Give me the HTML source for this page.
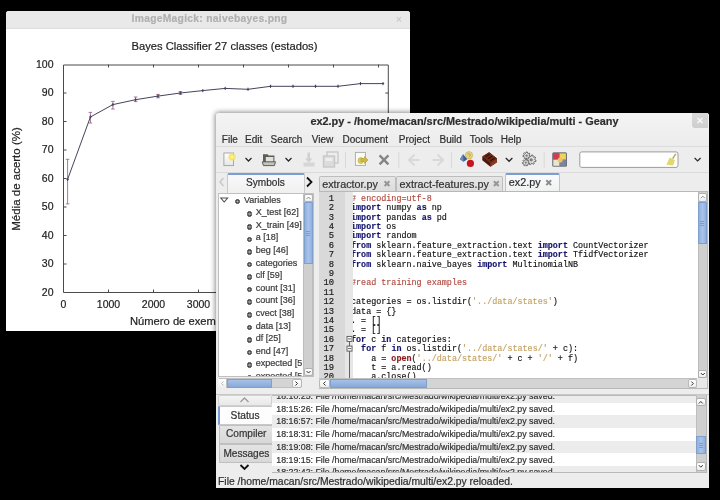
<!DOCTYPE html>
<html><head><meta charset="utf-8">
<style>
*{margin:0;padding:0;box-sizing:border-box}
html,body{width:720px;height:500px;overflow:hidden;background:#000}
body{position:relative;font-family:"Liberation Sans",sans-serif;color:#222;-webkit-font-smoothing:antialiased;will-change:transform}
.a{position:absolute}
.t{position:absolute;white-space:pre;line-height:1;-webkit-text-stroke:0.2px currentColor}
</style></head><body>

<!-- ImageMagick window -->
<div class="a" id="im" style="left:6px;top:11px;width:404px;height:320px;background:#fff;border-radius:3px 3px 0 0;overflow:hidden">
  <div class="a" style="left:0;top:0;width:404px;height:18px;background:#e9e9e9;border-bottom:1px solid #dedede"></div>
  <div class="t" style="left:125.6px;top:3.3px;font-size:10.3px;letter-spacing:0.28px;font-weight:bold;color:#b0b0b0">ImageMagick: naivebayes.png</div>
  <div class="t" style="left:390px;top:4px;font-size:10px;color:#c8c8c8">×</div>
</div>

<!-- chart svg -->
<svg class="a" style="left:0;top:0" width="720" height="500" viewBox="0 0 720 500">
  <g font-family="Liberation Sans" font-size="10.5" fill="#222" stroke="#222" stroke-width="0.2">
    <text x="224.5" y="50" font-size="11.2" text-anchor="middle">Bayes Classifier 27 classes (estados)</text>
    <text x="53.5" y="67.9" text-anchor="end">100</text>
    <text x="53.5" y="96.4" text-anchor="end">90</text>
    <text x="53.5" y="124.9" text-anchor="end">80</text>
    <text x="53.5" y="153.4" text-anchor="end">70</text>
    <text x="53.5" y="181.9" text-anchor="end">60</text>
    <text x="53.5" y="210.4" text-anchor="end">50</text>
    <text x="53.5" y="238.9" text-anchor="end">40</text>
    <text x="53.5" y="267.4" text-anchor="end">30</text>
    <text x="53.5" y="295.9" text-anchor="end">20</text>
    <text x="63.5" y="308" text-anchor="middle">0</text>
    <text x="108.5" y="308" text-anchor="middle">1000</text>
    <text x="153.5" y="308" text-anchor="middle">2000</text>
    <text x="198.5" y="308" text-anchor="middle">3000</text>
    <text x="130" y="325" font-size="11.2">Número de exemplos de treino</text>
    <text transform="translate(20,179) rotate(-90)" text-anchor="middle" font-size="11.5">Média de acerto (%)</text>
  </g>
  <g stroke="#4a4a4a" stroke-width="1" fill="none">
    <path d="M63.5 65 H388.3 V292.5 H63.5 Z"/>
    <path d="M63.5 93 h3 M63.5 121.5 h3 M63.5 150 h3 M63.5 178.5 h3 M63.5 207 h3 M63.5 235.5 h3 M63.5 264 h3"/>
    <path d="M388.3 93 h-3 M388.3 121.5 h-3"/>
    <path d="M108.5 64.5 v3 M153.5 64.5 v3 M198.5 64.5 v3 M243.5 64.5 v3 M288.5 64.5 v3 M333.5 64.5 v3 M378.5 64.5 v3"/>
    <path d="M108.5 292.5 v-3 M153.5 292.5 v-3 M198.5 292.5 v-3"/>
  </g>
  <g stroke="#a06a8c" stroke-width="0.9" fill="none">
    <path d="M67.6 159.3 V203.9 M65.8 159.3 h3.6 M65.8 203.9 h3.6"/>
    <path d="M90.4 112.4 V123 M88.6 112.4 h3.6 M88.6 123 h3.6"/>
    <path d="M112.9 101.4 V109 M111.1 101.4 h3.6 M111.1 109 h3.6"/>
    <path d="M135.6 97 V101.6 M133.8 97 h3.6 M133.8 101.6 h3.6"/>
    <path d="M158 94.4 V97.8 M156.2 94.4 h3.6 M156.2 97.8 h3.6"/>
    <path d="M180.4 91.6 V94.4 M178.6 91.6 h3.6 M178.6 94.4 h3.6"/>
  </g>
  <polyline fill="none" stroke="#44445e" stroke-width="1" points="67.6,179.4 90.4,117 112.9,104.6 135.6,99.7 158,96.1 180.4,93 202.8,90.6 225.2,88.4 248,89.3 270.5,86.3 293,86.3 315.5,86.3 338,86.3 360.5,83.6 383,83.6"/>
  <g stroke="#44445e" stroke-width="1" fill="none">
    <path d="M67.6 177.8 v3.2 M66.4 179.4 h2.4 M90.4 115.4 v3.2 M89.2 117 h2.4 M112.9 103.0 v3.2 M111.7 104.6 h2.4 M135.6 98.1 v3.2 M134.4 99.7 h2.4 M158 94.5 v3.2 M156.8 96.1 h2.4 M180.4 91.4 v3.2 M179.2 93 h2.4 M202.8 89.0 v3.2 M201.6 90.6 h2.4 M225.2 86.8 v3.2 M224.0 88.4 h2.4 M248 87.7 v3.2 M246.8 89.3 h2.4 M270.5 84.7 v3.2 M269.3 86.3 h2.4 M293 84.7 v3.2 M291.8 86.3 h2.4 M315.5 84.7 v3.2 M314.3 86.3 h2.4 M338 84.7 v3.2 M336.8 86.3 h2.4 M360.5 82.0 v3.2 M359.3 83.6 h2.4 M383 82.0 v3.2 M381.8 83.6 h2.4"/>
  </g>
</svg>


<!-- Geany window -->
<div class="a" style="left:216px;top:113px;width:493px;height:375px;background:#ededed;border-radius:3px 3px 0 0;box-shadow:0 0 5px 1px rgba(0,0,0,0.45)"></div>
<div class="a" style="left:216px;top:113px;width:493px;height:34px;background:linear-gradient(#f4f4f4,#ececec);border-radius:3px 3px 0 0;border-bottom:1px solid #dcdcdc"></div>
<div class="t" style="left:310.4px;top:116px;font-size:10.9px;font-weight:bold;color:#2e2e2e">ex2.py - /home/macan/src/Mestrado/wikipedia/multi - Geany</div>
<!-- close button -->
<div class="a" style="left:692px;top:113px;width:16px;height:15px;background:linear-gradient(#dadada,#cecece);border-radius:0 3px 0 3px"></div>
<svg class="a" style="left:692px;top:113px" width="16" height="15"><path d="M5.5 5 L10.5 10 M10.5 5 L5.5 10" stroke="#f8f8f8" stroke-width="1.5"/></svg>
<!-- menu -->
<div class="t" style="left:221.8px;top:135px;font-size:10px;color:#2e2e2e">File</div>
<div class="t" style="left:245px;top:135px;font-size:10px;color:#2e2e2e">Edit</div>
<div class="t" style="left:270.6px;top:135px;font-size:10px;color:#2e2e2e">Search</div>
<div class="t" style="left:311.8px;top:135px;font-size:10px;color:#2e2e2e">View</div>
<div class="t" style="left:342.5px;top:135px;font-size:10px;color:#2e2e2e">Document</div>
<div class="t" style="left:398.8px;top:135px;font-size:10px;color:#2e2e2e">Project</div>
<div class="t" style="left:439.6px;top:135px;font-size:10px;color:#2e2e2e">Build</div>
<div class="t" style="left:469.7px;top:135px;font-size:10px;color:#2e2e2e">Tools</div>
<div class="t" style="left:500.8px;top:135px;font-size:10px;color:#2e2e2e">Help</div>


<!-- toolbar -->
<svg class="a" style="left:216px;top:147px" width="493" height="26" viewBox="216 147 493 26">
  <defs>
    <radialGradient id="star" cx="0.5" cy="0.5" r="0.5"><stop offset="0" stop-color="#fffbb0"/><stop offset="0.5" stop-color="#f3e35a"/><stop offset="1" stop-color="#f3e35a" stop-opacity="0"/></radialGradient>
    <linearGradient id="pg" x1="0" y1="0" x2="0" y2="1"><stop offset="0" stop-color="#fff"/><stop offset="1" stop-color="#e6e6e6"/></linearGradient>
  </defs>
  <!-- new -->
  <rect x="223.9" y="153" width="9.6" height="12.6" fill="url(#pg)" stroke="#a0a0a0" stroke-width="0.9"/>
  <circle cx="232" cy="157" r="4.6" fill="url(#star)"/>
  <path d="M245.5 158 l3 3 l3 -3" fill="none" stroke="#2a2a2a" stroke-width="1.3"/>
  <!-- open -->
  <path d="M263 163 V154.2 h4.6 l1 1.3 h5.8 V163 z" fill="#5c5c58"/>
  <rect x="265.8" y="157" width="7.6" height="5" fill="#e2e2da"/>
  <path d="M262.3 161.8 h13.2 l-1.1 3.8 h-11 z" fill="#c4c4b8" stroke="#505050" stroke-width="0.9"/>
  <path d="M285.5 158 l3 3 l3 -3" fill="none" stroke="#2a2a2a" stroke-width="1.3"/>
  <!-- save disabled -->
  <path d="M307.5 152.5 h2.5 v6 h2.5 l-3.7 4 l-3.7 -4 h2.4 z" fill="#d0d0d0"/>
  <rect x="303.5" y="162.5" width="11" height="4" fill="#d6d6d6"/>
  <!-- save all disabled -->
  <rect x="327" y="152" width="11" height="11" fill="none" stroke="#cdcdcd" stroke-width="1.6"/>
  <rect x="323.5" y="156" width="11" height="11" fill="#dcdcdc" stroke="#c8c8c8" stroke-width="1.4"/>
  <rect x="325.5" y="158" width="7" height="3" fill="#eeeeee"/>
  <line x1="345.5" y1="152" x2="345.5" y2="168" stroke="#d8d8d8"/>
  <!-- revert -->
  <rect x="355.4" y="152.4" width="10" height="13" fill="#fbfbf6" stroke="#a8a8a8" stroke-width="0.9"/>
  <ellipse cx="360.8" cy="160.6" rx="2.8" ry="3" fill="#d9cc60" stroke="#b9a840" stroke-width="0.6"/>
  <path d="M361 158.5 h3.5 v-2 l3.5 3.5 l-3.5 3.5 v-2 h-3.5 z" fill="#cdb845" stroke="#a99530" stroke-width="0.5"/>
  <!-- close -->
  <path d="M379.6 155.4 L388.4 164.4 M388.4 155.4 L379.6 164.4" stroke="#858585" stroke-width="2.4"/>
  <line x1="398.8" y1="152" x2="398.8" y2="168" stroke="#d8d8d8"/>
  <!-- back/forward disabled -->
  <path d="M414.5 154.5 l-5.5 5.5 l5.5 5.5 M409.5 160 h10" fill="none" stroke="#d9d9d9" stroke-width="2"/>
  <path d="M437.5 154.5 l5.5 5.5 l-5.5 5.5 M442.5 160 h-10" fill="none" stroke="#d9d9d9" stroke-width="2"/>
  <line x1="451.6" y1="152" x2="451.6" y2="168" stroke="#d8d8d8"/>
  <!-- compile -->
  <circle cx="469" cy="155.3" r="3.7" fill="#e2d27c" stroke="#c8b460" stroke-width="0.7"/>
  <path d="M467.6 154.2 q1.5 -1 2.6 0.4 q0.6 1.2 -1 2" fill="none" stroke="#b09a40" stroke-width="0.8"/>
  <path d="M463.1 154.3 L467.3 159.3 L463.6 161.7 L460 159.3 Z" fill="#3c5f90"/>
  <path d="M463.1 154.3 L463.6 161.7 L460 159.3 Z" fill="#6b8cb8"/>
  <circle cx="470.4" cy="163.4" r="3.6" fill="#c8141e"/>
  <!-- build brick -->
  <path d="M482.3 156.5 l6.8 -4.2 l7.9 6.3 v3.6 l-6.6 4.5 l-8.1 -6.4 z" fill="#4a170a"/>
  <path d="M482.3 156.5 l6.8 -4.2 l7.9 6.3 l-6.6 4.5 z" fill="#6e2a16"/>
  <path d="M490.4 163.1 l6.6 -4.5 v3.6 l-6.6 4.5 z" fill="#8a3a22"/>
  <path d="M485.5 156.8 l4.2 -2.7 M488 158.8 l4.2 -2.7 M490.5 160.8 l4.2 -2.7" stroke="#2e0d05" stroke-width="1.1"/>
<path d="M505.8 158 l3.3 3.3 l3.3 -3.3" fill="none" stroke="#2a2a2a" stroke-width="1.3"/>
  <!-- gears -->
<path d="M534.80,159.80 L536.07,160.38 L535.73,161.68 L534.34,161.56 L533.75,162.35 L534.23,163.65 L533.08,164.33 L532.18,163.26 L531.20,163.40 L530.62,164.67 L529.32,164.33 L529.44,162.94 L528.65,162.35 L527.35,162.83 L526.67,161.68 L527.74,160.78 L527.60,159.80 L526.33,159.22 L526.67,157.92 L528.06,158.04 L528.65,157.25 L528.17,155.95 L529.32,155.27 L530.22,156.34 L531.20,156.20 L531.78,154.93 L533.08,155.27 L532.96,156.66 L533.75,157.25 L535.05,156.77 L535.73,157.92 L534.66,158.82 Z" fill="#e2e2e2" stroke="#6a6a6a" stroke-width="1"/>
<circle cx="531.2" cy="159.8" r="1.62" fill="#7a7a7a"/>
<path d="M529.20,155.60 L530.27,156.10 L529.93,157.21 L528.77,157.03 L528.22,157.63 L528.50,158.78 L527.42,159.21 L526.83,158.19 L526.02,158.13 L525.30,159.06 L524.29,158.49 L524.72,157.40 L524.26,156.73 L523.08,156.74 L522.90,155.60 L524.02,155.25 L524.26,154.47 L523.51,153.56 L524.29,152.71 L525.27,153.37 L526.02,153.07 L526.27,151.91 L527.42,151.99 L527.51,153.17 L528.22,153.57 L529.27,153.04 L529.93,153.99 L529.07,154.80 Z" fill="#e2e2e2" stroke="#6a6a6a" stroke-width="1"/>
<circle cx="526.6" cy="155.6" r="1.17" fill="#7a7a7a"/>
<path d="M528.20,162.60 L529.17,163.06 L528.86,164.08 L527.80,163.92 L527.30,164.48 L527.54,165.52 L526.56,165.91 L526.02,164.99 L525.27,164.94 L524.61,165.78 L523.68,165.26 L524.07,164.26 L523.64,163.64 L522.57,163.65 L522.40,162.60 L523.42,162.28 L523.64,161.56 L522.96,160.73 L523.68,159.94 L524.57,160.54 L525.27,160.26 L525.50,159.21 L526.56,159.29 L526.64,160.35 L527.30,160.72 L528.26,160.25 L528.86,161.12 L528.08,161.86 Z" fill="#e2e2e2" stroke="#6a6a6a" stroke-width="1"/>
<circle cx="525.8" cy="162.6" r="1.08" fill="#7a7a7a"/>
<line x1="544.2" y1="152" x2="544.2" y2="168" stroke="#d8d8d8"/>
  <!-- color chooser -->
  <rect x="552.2" y="152.3" width="14.8" height="14.5" rx="1.5" fill="#707078"/>
  <rect x="553.3" y="153.4" width="6.3" height="6.3" fill="#d23a58"/>
  <rect x="559.6" y="153.4" width="6.3" height="6.3" fill="#efd35a"/>
  <rect x="553.3" y="159.7" width="6.3" height="6.1" fill="#e6e6d2"/>
  <rect x="559.6" y="159.7" width="6.3" height="6.1" fill="#7c84a4"/>
  <circle cx="560.2" cy="160" r="2.5" fill="#e9c560"/>
  <!-- search entry -->
  <rect x="579.8" y="151.9" width="98.2" height="15.5" rx="2" fill="#fff" stroke="#9c9c9c" stroke-width="1"/>
  <path d="M669.8 157.6 L675 160.2 L673 165.6 L666.4 164.8 Z" fill="#e2d66e"/>
  <path d="M675.8 153.8 L672.6 158.6" stroke="#b7a64c" stroke-width="1.4"/>
  <path d="M694.6 158 l3 3 l3 -3" fill="none" stroke="#2a2a2a" stroke-width="1.2"/>
</svg>
<div class="a" style="left:216px;top:172px;width:493px;height:1px;background:#dadada"></div>


<!-- sidebar -->
<svg class="a" style="left:216px;top:172px" width="100" height="22" viewBox="216 172 100 22">
  <path d="M223.5 178 l-3.5 4 l3.5 4" fill="none" stroke="#c4c4c4" stroke-width="1.3"/>
  <path d="M307 177.5 l4.5 4.5 l-4.5 4.5" fill="none" stroke="#111" stroke-width="1.8"/>
</svg>
<div class="a" style="left:226.5px;top:172.5px;width:78.3px;height:21px;background:linear-gradient(#f8f9fb,#efefef);border:1px solid #c8c8c8;border-bottom:none;border-top:2.5px solid #7c9dd0;border-radius:2px 2px 0 0"></div>
<div class="t" style="left:246px;top:178px;font-size:10.1px;color:#2e2e2e">Symbols</div>
<div class="a" style="left:217.5px;top:193px;width:96.5px;height:184px;background:#fff;border:1px solid #c0c0c0"></div>
<div style="position:absolute;left:218px;top:194px;width:83.5px;height:182px;overflow:hidden">
<div style="position:absolute;left:-218px;top:-194px;width:720px;height:500px">
<svg class="a" style="left:219px;top:196px" width="10" height="8"><path d="M1.8 2 h6.8 l-3.4 4 z" fill="none" stroke="#505050" stroke-width="1.1"/></svg>
<div class="t" style="left:243.9px;top:195.70px;font-size:9px;color:#3a3a3a">Variables</div>
<div class="a" style="left:234.9px;top:198.80px;width:5.6px;height:5.6px;border-radius:50%;background:radial-gradient(circle at 50% 50%,#b0b0b0 0,#8a8a8a 40%,#4a4a4a 75%);border:1px solid #3a3a3a"></div>
<div class="t" style="left:255.8px;top:208.28px;font-size:9px;color:#3a3a3a">X_test [62]</div>
<div class="a" style="left:246.6px;top:211.38px;width:5.6px;height:5.6px;border-radius:50%;background:radial-gradient(circle at 50% 50%,#b0b0b0 0,#8a8a8a 40%,#4a4a4a 75%);border:1px solid #3a3a3a"></div>
<div class="t" style="left:255.8px;top:220.86px;font-size:9px;color:#3a3a3a">X_train [49]</div>
<div class="a" style="left:246.6px;top:223.96px;width:5.6px;height:5.6px;border-radius:50%;background:radial-gradient(circle at 50% 50%,#b0b0b0 0,#8a8a8a 40%,#4a4a4a 75%);border:1px solid #3a3a3a"></div>
<div class="t" style="left:255.8px;top:233.44px;font-size:9px;color:#3a3a3a">a [18]</div>
<div class="a" style="left:246.6px;top:236.54px;width:5.6px;height:5.6px;border-radius:50%;background:radial-gradient(circle at 50% 50%,#b0b0b0 0,#8a8a8a 40%,#4a4a4a 75%);border:1px solid #3a3a3a"></div>
<div class="t" style="left:255.8px;top:246.02px;font-size:9px;color:#3a3a3a">beg [46]</div>
<div class="a" style="left:246.6px;top:249.12px;width:5.6px;height:5.6px;border-radius:50%;background:radial-gradient(circle at 50% 50%,#b0b0b0 0,#8a8a8a 40%,#4a4a4a 75%);border:1px solid #3a3a3a"></div>
<div class="t" style="left:255.8px;top:258.60px;font-size:9px;color:#3a3a3a">categories</div>
<div class="a" style="left:246.6px;top:261.70px;width:5.6px;height:5.6px;border-radius:50%;background:radial-gradient(circle at 50% 50%,#b0b0b0 0,#8a8a8a 40%,#4a4a4a 75%);border:1px solid #3a3a3a"></div>
<div class="t" style="left:255.8px;top:271.18px;font-size:9px;color:#3a3a3a">clf [59]</div>
<div class="a" style="left:246.6px;top:274.28px;width:5.6px;height:5.6px;border-radius:50%;background:radial-gradient(circle at 50% 50%,#b0b0b0 0,#8a8a8a 40%,#4a4a4a 75%);border:1px solid #3a3a3a"></div>
<div class="t" style="left:255.8px;top:283.76px;font-size:9px;color:#3a3a3a">count [31]</div>
<div class="a" style="left:246.6px;top:286.86px;width:5.6px;height:5.6px;border-radius:50%;background:radial-gradient(circle at 50% 50%,#b0b0b0 0,#8a8a8a 40%,#4a4a4a 75%);border:1px solid #3a3a3a"></div>
<div class="t" style="left:255.8px;top:296.34px;font-size:9px;color:#3a3a3a">count [36]</div>
<div class="a" style="left:246.6px;top:299.44px;width:5.6px;height:5.6px;border-radius:50%;background:radial-gradient(circle at 50% 50%,#b0b0b0 0,#8a8a8a 40%,#4a4a4a 75%);border:1px solid #3a3a3a"></div>
<div class="t" style="left:255.8px;top:308.92px;font-size:9px;color:#3a3a3a">cvect [38]</div>
<div class="a" style="left:246.6px;top:312.02px;width:5.6px;height:5.6px;border-radius:50%;background:radial-gradient(circle at 50% 50%,#b0b0b0 0,#8a8a8a 40%,#4a4a4a 75%);border:1px solid #3a3a3a"></div>
<div class="t" style="left:255.8px;top:321.50px;font-size:9px;color:#3a3a3a">data [13]</div>
<div class="a" style="left:246.6px;top:324.60px;width:5.6px;height:5.6px;border-radius:50%;background:radial-gradient(circle at 50% 50%,#b0b0b0 0,#8a8a8a 40%,#4a4a4a 75%);border:1px solid #3a3a3a"></div>
<div class="t" style="left:255.8px;top:334.08px;font-size:9px;color:#3a3a3a">df [25]</div>
<div class="a" style="left:246.6px;top:337.18px;width:5.6px;height:5.6px;border-radius:50%;background:radial-gradient(circle at 50% 50%,#b0b0b0 0,#8a8a8a 40%,#4a4a4a 75%);border:1px solid #3a3a3a"></div>
<div class="t" style="left:255.8px;top:346.66px;font-size:9px;color:#3a3a3a">end [47]</div>
<div class="a" style="left:246.6px;top:349.76px;width:5.6px;height:5.6px;border-radius:50%;background:radial-gradient(circle at 50% 50%,#b0b0b0 0,#8a8a8a 40%,#4a4a4a 75%);border:1px solid #3a3a3a"></div>
<div class="t" style="left:255.8px;top:359.24px;font-size:9px;color:#3a3a3a">expected [56]</div>
<div class="a" style="left:246.6px;top:362.34px;width:5.6px;height:5.6px;border-radius:50%;background:radial-gradient(circle at 50% 50%,#b0b0b0 0,#8a8a8a 40%,#4a4a4a 75%);border:1px solid #3a3a3a"></div>
<div class="t" style="left:255.8px;top:371.82px;font-size:9px;color:#3a3a3a">expected [57]</div>
<div class="a" style="left:246.6px;top:374.92px;width:5.6px;height:5.6px;border-radius:50%;background:radial-gradient(circle at 50% 50%,#b0b0b0 0,#8a8a8a 40%,#4a4a4a 75%);border:1px solid #3a3a3a"></div>

</div></div>
<!-- sidebar vscroll -->
<div class="a" style="left:303.2px;top:193.5px;width:10px;height:183px;background:#cfcfcf;border:1px solid #bdbdbd"></div>
<div class="a" style="left:303.7px;top:194px;width:9px;height:8px;background:linear-gradient(#fff,#eee);border:1px solid #b0b0b0;border-radius:2px"></div>
<svg class="a" style="left:303.7px;top:194px" width="9" height="8"><path d="M2.5 5 l2 -2 l2 2" fill="none" stroke="#888" stroke-width="0.9"/></svg>
<div class="a" style="left:303.7px;top:202px;width:9px;height:62px;background:linear-gradient(90deg,#8fb0de,#a9c4ea,#8fb0de);border:1px solid #7f9fcc"></div>
<div class="a" style="left:306px;top:231px;width:4px;height:5px;background:linear-gradient(#7f9cc8 0,#7f9cc8 1px,transparent 1px,transparent 2px,#7f9cc8 2px,#7f9cc8 3px,transparent 3px,transparent 4px,#7f9cc8 4px)"></div>
<div class="a" style="left:303.7px;top:367.8px;width:9px;height:8.5px;background:linear-gradient(#fff,#eee);border:1px solid #b0b0b0;border-radius:2px"></div>
<svg class="a" style="left:303.7px;top:367.8px" width="9" height="9"><path d="M2.5 3 l2 2 l2 -2" fill="none" stroke="#333" stroke-width="1"/></svg>
<!-- sidebar hscroll -->
<div class="a" style="left:217.5px;top:378.3px;width:84px;height:9.8px;background:#d4d4d4;border:1px solid #c0c0c0;border-radius:2px"></div>
<div class="a" style="left:218px;top:378.8px;width:9px;height:9px;background:linear-gradient(#fff,#eee);border-right:1px solid #c0c0c0"></div>
<svg class="a" style="left:218px;top:378.8px" width="9" height="9"><path d="M5.5 2.5 l-2 2 l2 2" fill="none" stroke="#bbb" stroke-width="1"/></svg>
<div class="a" style="left:227.1px;top:378.5px;width:44.7px;height:9.5px;background:linear-gradient(#a6c1e8,#88a9d8);border:1px solid #7f9fcc"></div>
<div class="a" style="left:292px;top:378.8px;width:9.5px;height:9px;background:linear-gradient(#fff,#eee);border:1px solid #b8b8b8;border-radius:2px"></div>
<svg class="a" style="left:292px;top:378.8px" width="9" height="9"><path d="M3.5 2.5 l2 2 l-2 2" fill="none" stroke="#333" stroke-width="1"/></svg>


<style>
.cl{position:absolute;left:-1.6px;white-space:pre;font-family:"Liberation Mono",monospace;font-size:8.42px;line-height:10px;color:#111;margin-top:-4.7px;-webkit-text-stroke:0.15px currentColor}
.k{color:#15156e;font-weight:bold}
.s{color:#c3a262}
.c{color:#b04a40}
.o{color:#8a1a1a;font-weight:bold}
.ln{position:absolute;left:319px;width:15px;text-align:right;white-space:pre;font-family:"Liberation Mono",monospace;font-size:8.8px;line-height:10px;color:#222;margin-top:1.1px;-webkit-text-stroke:0.2px #222}
</style>
<!-- editor tabs -->
<div class="a" style="left:319px;top:175.5px;width:76.5px;height:16px;background:linear-gradient(#e6e6e6,#dcdcdc);border:1px solid #bdbdbd;border-bottom:none;border-radius:2px 2px 0 0"></div>
<div class="t" style="left:322.2px;top:178.5px;font-size:10.8px;color:#333">extractor.py</div>
<div class="a" style="left:396.3px;top:175.5px;width:106.5px;height:16px;background:linear-gradient(#e6e6e6,#dcdcdc);border:1px solid #bdbdbd;border-bottom:none;border-radius:2px 2px 0 0"></div>
<div class="t" style="left:399.5px;top:178.5px;font-size:10.8px;color:#333">extract-features.py</div>
<div class="a" style="left:504.5px;top:172.5px;width:55px;height:19px;background:linear-gradient(#fafbfd,#f0f0f0);border:1px solid #c4c4c4;border-bottom:none;border-top:2.5px solid #7c9dd0;border-radius:2px 2px 0 0"></div>
<div class="t" style="left:508.8px;top:177px;font-size:10.8px;color:#2e2e2e">ex2.py</div>
<svg class="a" style="left:380px;top:176px" width="180" height="14" viewBox="380 176 180 14">
  <path d="M384.6 181.2 l4.8 4.8 M389.4 181.2 l-4.8 4.8" stroke="#969696" stroke-width="2"/>
  <path d="M493.9 181.2 l4.8 4.8 M498.7 181.2 l-4.8 4.8" stroke="#969696" stroke-width="2"/>
  <path d="M546.3 180.3 l4.8 4.8 M551.1 180.3 l-4.8 4.8" stroke="#8c8c8c" stroke-width="2"/>
</svg>
<!-- editor frame -->
<div class="a" style="left:318.5px;top:191px;width:389px;height:197.5px;background:#fff;border:1px solid #b8b8b8"></div>
<div class="a" style="left:319px;top:192px;width:26px;height:186.3px;background:#d9d9d9"></div>
<div class="a" style="left:345px;top:192px;width:7.6px;height:186.3px;background:#e6e6e6"></div>
<div class="ln" style="top:192.80px">1</div>
<div class="ln" style="top:202.19px">2</div>
<div class="ln" style="top:211.58px">3</div>
<div class="ln" style="top:220.97px">4</div>
<div class="ln" style="top:230.36px">5</div>
<div class="ln" style="top:239.75px">6</div>
<div class="ln" style="top:249.14px">7</div>
<div class="ln" style="top:258.53px">8</div>
<div class="ln" style="top:267.92px">9</div>
<div class="ln" style="top:277.31px">10</div>
<div class="ln" style="top:286.70px">11</div>
<div class="ln" style="top:296.09px">12</div>
<div class="ln" style="top:305.48px">13</div>
<div class="ln" style="top:314.87px">14</div>
<div class="ln" style="top:324.26px">15</div>
<div class="ln" style="top:333.65px">16</div>
<div class="ln" style="top:343.04px">17</div>
<div class="ln" style="top:352.43px">18</div>
<div class="ln" style="top:361.82px">19</div>
<div class="ln" style="top:371.21px">20</div>

<div style="position:absolute;left:352.6px;top:192px;width:344.5px;height:186.3px;overflow:hidden">
<div style="position:absolute;left:0;top:6px">
<div class="cl" style="top:0.60px"><span class="c"># encoding=utf-8</span></div>
<div class="cl" style="top:9.99px"><b class="k">import</b> numpy <b class="k">as</b> np</div>
<div class="cl" style="top:19.38px"><b class="k">import</b> pandas <b class="k">as</b> pd</div>
<div class="cl" style="top:28.77px"><b class="k">import</b> os</div>
<div class="cl" style="top:38.16px"><b class="k">import</b> random</div>
<div class="cl" style="top:47.55px"><b class="k">from</b> sklearn.feature_extraction.text <b class="k">import</b> CountVectorizer</div>
<div class="cl" style="top:56.94px"><b class="k">from</b> sklearn.feature_extraction.text <b class="k">import</b> TfidfVectorizer</div>
<div class="cl" style="top:66.33px"><b class="k">from</b> sklearn.naive_bayes <b class="k">import</b> MultinomialNB</div>
<div class="cl" style="top:75.72px"></div>
<div class="cl" style="top:85.11px"><span class="c">#read training examples</span></div>
<div class="cl" style="top:94.50px"></div>
<div class="cl" style="top:103.89px">categories = os.listdir(<span class="s">'../data/states'</span>)</div>
<div class="cl" style="top:113.28px">data = {}</div>
<div class="cl" style="top:122.67px">. = []</div>
<div class="cl" style="top:132.06px">. = []</div>
<div class="cl" style="top:141.45px"><b class="k">for</b> c <b class="k">in</b> categories:</div>
<div class="cl" style="top:150.84px">  <b class="k">for</b> f <b class="k">in</b> os.listdir(<span class="s">'../data/states/'</span> + c):</div>
<div class="cl" style="top:160.23px">    a = <b class="o">open</b>(<span class="s">'../data/states/'</span> + c + <span class="s">'/'</span> + f)</div>
<div class="cl" style="top:169.62px">    t = a.read()</div>
<div class="cl" style="top:179.01px">    a.close()</div>

</div></div>
<svg class="a" style="left:344px;top:330px" width="10" height="50" viewBox="344 330 10 50">
  <rect x="347" y="336.4" width="5" height="5" fill="#fff" stroke="#555" stroke-width="0.9"/>
  <line x1="348" y1="338.9" x2="351" y2="338.9" stroke="#555" stroke-width="0.9"/>
  <rect x="347" y="346.1" width="5" height="5" fill="#fff" stroke="#555" stroke-width="0.9"/>
  <line x1="348" y1="348.6" x2="351" y2="348.6" stroke="#555" stroke-width="0.9"/>
  <line x1="349.5" y1="341.4" x2="349.5" y2="346.1" stroke="#555" stroke-width="0.9"/>
  <line x1="349.5" y1="351.1" x2="349.5" y2="378.3" stroke="#555" stroke-width="0.9"/>
</svg>
<!-- editor vscroll -->
<div class="a" style="left:697.5px;top:192px;width:9.5px;height:186.3px;background:#cfcfcf;border-left:1px solid #bdbdbd"></div>
<div class="a" style="left:697.5px;top:193.3px;width:9.5px;height:8.7px;background:linear-gradient(#fff,#eee);border:1px solid #b0b0b0;border-radius:2px"></div>
<svg class="a" style="left:697.5px;top:193.3px" width="10" height="9"><path d="M2.8 5.2 l2 -2 l2 2" fill="none" stroke="#888" stroke-width="0.9"/></svg>
<div class="a" style="left:697.5px;top:202px;width:9.5px;height:42px;background:linear-gradient(90deg,#8fb0de,#a9c4ea,#8fb0de);border:1px solid #7f9fcc"></div>
<div class="a" style="left:700px;top:221px;width:4px;height:5px;background:linear-gradient(#7f9cc8 0,#7f9cc8 1px,transparent 1px,transparent 2px,#7f9cc8 2px,#7f9cc8 3px,transparent 3px,transparent 4px,#7f9cc8 4px)"></div>
<div class="a" style="left:697.5px;top:369.5px;width:9.5px;height:8.5px;background:linear-gradient(#fff,#eee);border:1px solid #b0b0b0;border-radius:2px"></div>
<svg class="a" style="left:697.5px;top:369.5px" width="10" height="9"><path d="M2.8 3 l2 2 l2 -2" fill="none" stroke="#333" stroke-width="1"/></svg>
<!-- editor hscroll -->
<div class="a" style="left:697px;top:378.3px;width:10px;height:9.7px;background:#e9e9e9"></div>
<div class="a" style="left:319px;top:378.3px;width:378px;height:9.5px;background:#d4d4d4;border-top:1px solid #c0c0c0"></div>
<div class="a" style="left:319px;top:378.8px;width:11px;height:9px;background:linear-gradient(#fff,#eee);border:1px solid #b8b8b8;border-radius:2px"></div>
<svg class="a" style="left:319px;top:378.8px" width="11" height="9"><path d="M6.5 2.5 l-2 2 l2 2" fill="none" stroke="#333" stroke-width="1"/></svg>
<div class="a" style="left:330px;top:378.5px;width:96.7px;height:9.5px;background:linear-gradient(#a6c1e8,#88a9d8);border:1px solid #7f9fcc"></div>
<div class="a" style="left:688px;top:378.8px;width:8.5px;height:9px;background:linear-gradient(#fff,#eee);border:1px solid #b8b8b8;border-radius:2px"></div>
<svg class="a" style="left:688px;top:378.8px" width="9" height="9"><path d="M3.3 2.5 l2 2 l-2 2" fill="none" stroke="#333" stroke-width="1"/></svg>


<!-- pane separator lines -->
<div class="a" style="left:216px;top:393.5px;width:493px;height:1px;background:#c8c8c8"></div>
<!-- bottom tabs -->
<div class="a" style="left:218px;top:394.5px;width:54px;height:11px;background:linear-gradient(#f4f4f4,#e8e8e8);border:1px solid #d0d0d0;border-radius:2px"></div>
<svg class="a" style="left:236px;top:395px" width="18" height="10"><path d="M4.5 7 l4 -4 l4 4" fill="none" stroke="#9a9a9a" stroke-width="1.3"/></svg>
<div class="a" style="left:218px;top:405.5px;width:54px;height:19px;background:#fdfdfd;border:1px solid #c8c8c8;border-left:2.5px solid #7c9dd0;border-right:none"></div>
<div class="t" style="left:230.6px;top:410.7px;font-size:10.2px;color:#2e2e2e">Status</div>
<div class="a" style="left:219px;top:424.5px;width:53px;height:19px;background:linear-gradient(#e4e4e4,#d8d8d8);border:1px solid #c0c0c0;border-right:none"></div>
<div class="t" style="left:226px;top:429.3px;font-size:10.1px;color:#333">Compiler</div>
<div class="a" style="left:219px;top:443.5px;width:53px;height:19px;background:linear-gradient(#e4e4e4,#d8d8d8);border:1px solid #c0c0c0;border-right:none"></div>
<div class="t" style="left:223.4px;top:448.7px;font-size:10.1px;color:#333">Messages</div>
<div class="a" style="left:218px;top:462.5px;width:54px;height:10px;background:#ededed"></div>
<svg class="a" style="left:236px;top:462px" width="18" height="10"><path d="M4.5 3 l4 4 l4 -4" fill="none" stroke="#111" stroke-width="1.8"/></svg>
<!-- message list -->
<div class="a" style="left:271.8px;top:395px;width:435.5px;height:77.5px;background:#fff;border:1px solid #b8b8b8"></div>
<div style="position:absolute;left:272.3px;top:395.8px;width:424px;height:76.2px;overflow:hidden">
<div style="position:absolute;left:0;top:-1.8px;width:430px;height:90px">
<div class="a" style="left:0;top:-4.20px;width:430px;height:12.7px;background:#ececec"></div>
<div class="t" style="left:4px;top:-2.00px;font-size:8.8px;color:#333">18:10:25: File /home/macan/src/Mestrado/wikipedia/multi/ex2.py saved.</div>
<div class="a" style="left:0;top:8.50px;width:430px;height:12.7px;background:#ffffff"></div>
<div class="t" style="left:4px;top:10.70px;font-size:8.8px;color:#333">18:15:26: File /home/macan/src/Mestrado/wikipedia/multi/ex2.py saved.</div>
<div class="a" style="left:0;top:21.20px;width:430px;height:12.7px;background:#ececec"></div>
<div class="t" style="left:4px;top:23.40px;font-size:8.8px;color:#333">18:16:57: File /home/macan/src/Mestrado/wikipedia/multi/ex2.py saved.</div>
<div class="a" style="left:0;top:33.90px;width:430px;height:12.7px;background:#ffffff"></div>
<div class="t" style="left:4px;top:36.10px;font-size:8.8px;color:#333">18:18:31: File /home/macan/src/Mestrado/wikipedia/multi/ex2.py saved.</div>
<div class="a" style="left:0;top:46.60px;width:430px;height:12.7px;background:#ececec"></div>
<div class="t" style="left:4px;top:48.80px;font-size:8.8px;color:#333">18:19:08: File /home/macan/src/Mestrado/wikipedia/multi/ex2.py saved.</div>
<div class="a" style="left:0;top:59.30px;width:430px;height:12.7px;background:#ffffff"></div>
<div class="t" style="left:4px;top:61.50px;font-size:8.8px;color:#333">18:19:15: File /home/macan/src/Mestrado/wikipedia/multi/ex2.py saved.</div>
<div class="a" style="left:0;top:72.00px;width:430px;height:12.7px;background:#ececec"></div>
<div class="t" style="left:4px;top:74.20px;font-size:8.8px;color:#333">18:22:42: File /home/macan/src/Mestrado/wikipedia/multi/ex2.py saved.</div>
</div></div>
<!-- msg vscroll -->
<div class="a" style="left:696px;top:395px;width:10px;height:77px;background:#cfcfcf;border-left:1px solid #bdbdbd"></div>
<div class="a" style="left:696px;top:397.5px;width:9.5px;height:8.5px;background:linear-gradient(#fff,#eee);border:1px solid #b0b0b0;border-radius:2px"></div>
<svg class="a" style="left:696px;top:397.5px" width="10" height="9"><path d="M2.8 5.5 l2 -2 l2 2" fill="none" stroke="#333" stroke-width="1"/></svg>
<div class="a" style="left:696px;top:436px;width:9.5px;height:18px;background:linear-gradient(90deg,#8fb0de,#a9c4ea,#8fb0de);border:1px solid #7f9fcc"></div>
<div class="a" style="left:698.5px;top:443px;width:4px;height:5px;background:linear-gradient(#7f9cc8 0,#7f9cc8 1px,transparent 1px,transparent 2px,#7f9cc8 2px,#7f9cc8 3px,transparent 3px,transparent 4px,#7f9cc8 4px)"></div>
<div class="a" style="left:696px;top:461.5px;width:9.5px;height:9px;background:linear-gradient(#fff,#eee);border:1px solid #b0b0b0;border-radius:2px"></div>
<svg class="a" style="left:696px;top:461.5px" width="10" height="9"><path d="M2.8 3.2 l2 2 l2 -2" fill="none" stroke="#333" stroke-width="1"/></svg>
<!-- status bar -->
<div class="a" style="left:216px;top:473px;width:493px;height:15px;background:#ededed"></div>
<div class="t" style="left:218px;top:476.8px;font-size:10.37px;color:#2e2e2e">File /home/macan/src/Mestrado/wikipedia/multi/ex2.py reloaded.</div>

</body></html>
